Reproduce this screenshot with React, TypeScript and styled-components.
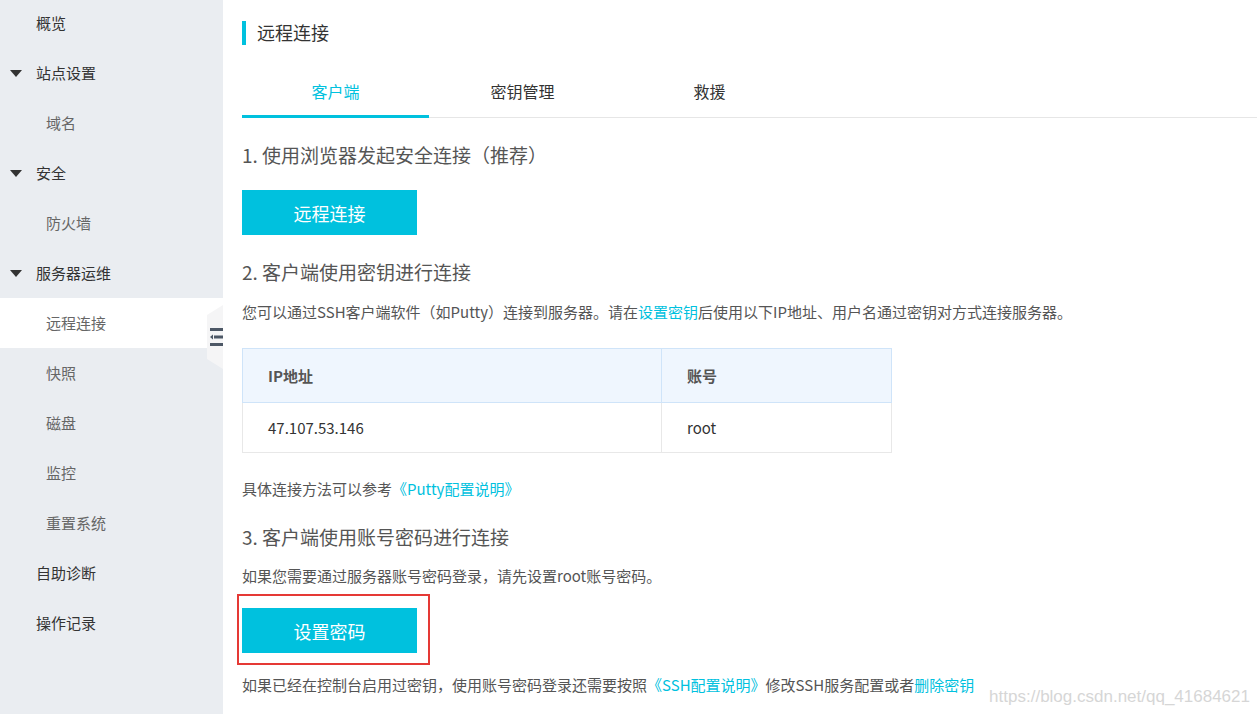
import React from "react";
import styled, { createGlobalStyle } from "styled-components";

const Global = createGlobalStyle`
  html, body {
    margin: 0;
    padding: 0;
    background: #fff;
    font-family: "Noto Sans CJK SC", "Noto Sans", sans-serif;
  }
`;

const Page = styled.div`
  display: flex;
  height: 714px;
  overflow: hidden;
  position: relative;
`;

const Side = styled.div`
  width: 223px;
  flex-shrink: 0;
  background: #eaedf1;
  margin-top: -2px;
  position: relative;
`;

const NavItem = styled.div<{ sub?: boolean; active?: boolean }>`
  height: 50px;
  display: flex;
  align-items: center;
  padding-bottom: 1px;
  box-sizing: border-box;
  font-size: 15px;
  color: ${({ sub }) => (sub ? "#666" : "#333")};
  padding-left: ${({ sub }) => (sub ? "46px" : "36px")};
  background: ${({ active }) => (active ? "#fff" : "transparent")};
  position: relative;
`;

const Caret = styled.span`
  position: absolute;
  left: 10px;
  top: 22px;
  width: 0;
  height: 0;
  border-left: 6px solid transparent;
  border-right: 6px solid transparent;
  border-top: 7px solid #333;
`;

const Handle = styled.div`
  position: absolute;
  left: 207px;
  top: 305px;
  width: 16px;
  height: 64px;
  background: #f5f5f6;
  clip-path: polygon(0 10px, 100% 0, 100% 100%, 0 54px);
  display: flex;
  align-items: center;
  justify-content: flex-end;
`;

const Main = styled.div`
  flex: 1;
  padding-left: 19px;
  color: #555;
`;

const Title = styled.div`
  margin-top: 21px;
  height: 24px;
  border-left: 4px solid #00c1de;
  padding-left: 11px;
  font-size: 18px;
  line-height: 22px;
  color: #333;
`;

const Tabs = styled.div`
  display: flex;
  margin-top: 23px;
  border-bottom: 1px solid #e6e6e6;
`;

const Tab = styled.div<{ active?: boolean }>`
  width: 187px;
  height: 50px;
  box-sizing: border-box;
  display: flex;
  align-items: center;
  justify-content: center;
  font-size: 16px;
  color: ${({ active }) => (active ? "#00c1de" : "#333")};
  border-bottom: 3px solid ${({ active }) => (active ? "#00c1de" : "transparent")};
  margin-bottom: -1px;
  padding-bottom: 1px;
`;

const Heading = styled.div<{ top: number }>`
  margin-top: ${({ top }) => top}px;
  font-size: 19px;
  line-height: 26px;
  color: #555;
  white-space: nowrap;
`;

const Button = styled.div`
  width: 175px;
  height: 45px;
  background: #00c1de;
  color: #fff;
  font-size: 18px;
  display: flex;
  align-items: center;
  justify-content: center;
`;

const ButtonWrap = styled.div<{ top: number }>`
  margin-top: ${({ top }) => top}px;
`;

const Highlight = styled.div`
  margin-top: 8px;
  margin-left: -5px;
  width: 193px;
  height: 71px;
  border: 2px solid #e53935;
  padding: 12px 0 0 3px;
  box-sizing: border-box;
`;

const Text = styled.div<{ top: number }>`
  margin-top: ${({ top }) => top}px;
  font-size: 15px;
  line-height: 20px;
  color: #555;
  white-space: nowrap;
`;

const A = styled.span`
  color: #00c1de;
`;

const Table = styled.table`
  margin-top: 26px;
  width: 650px;
  border-collapse: collapse;
  font-size: 15px;
  color: #333;
`;

const Th = styled.th<{ w?: number }>`
  height: 53px;
  padding: 0 0 0 25px;
  background: #eff6fe;
  border: 1px solid #cfe4f9;
  text-align: left;
  font-weight: bold;
  color: #555;
  width: ${({ w }) => (w ? `${w}px` : "auto")};
`;

const Td = styled.td`
  height: 49px;
  padding: 0 0 0 25px;
  border: 1px solid #e8e8e8;
`;

const Mark = styled.div`
  position: absolute;
  right: 7px;
  bottom: 7px;
  font-family: "Liberation Sans", Arial, sans-serif;
  font-size: 17px;
  color: #d6d6d6;
`;

export default function App() {
  return (
    <Page>
      <Global />
      <Side>
        <NavItem>概览</NavItem>
        <NavItem><Caret />站点设置</NavItem>
        <NavItem sub>域名</NavItem>
        <NavItem><Caret />安全</NavItem>
        <NavItem sub>防火墙</NavItem>
        <NavItem><Caret />服务器运维</NavItem>
        <NavItem sub active>远程连接</NavItem>
        <NavItem sub>快照</NavItem>
        <NavItem sub>磁盘</NavItem>
        <NavItem sub>监控</NavItem>
        <NavItem sub>重置系统</NavItem>
        <NavItem>自助诊断</NavItem>
        <NavItem>操作记录</NavItem>
      </Side>
      <Handle>
        <svg width="13" height="18" viewBox="0 0 13 18">
          <rect x="0" y="0" width="13" height="3" fill="#4d5866" />
          <rect x="4" y="7.5" width="9" height="3" fill="#4d5866" />
          <path d="M0 9 L3 6.5 L3 11.5 Z" fill="#4d5866" />
          <rect x="0" y="15" width="13" height="3" fill="#4d5866" />
        </svg>
      </Handle>
      <Main>
        <Title>远程连接</Title>
        <Tabs>
          <Tab active>客户端</Tab>
          <Tab>密钥管理</Tab>
          <Tab>救援</Tab>
        </Tabs>
        <Heading top={24}>1. 使用浏览器发起安全连接（推荐）</Heading>
        <ButtonWrap top={22}>
          <Button>远程连接</Button>
        </ButtonWrap>
        <Heading top={24}>2. 客户端使用密钥进行连接</Heading>
        <Text top={17}>
          您可以通过SSH客户端软件（如Putty）连接到服务器。请在<A>设置密钥</A>后使用以下IP地址、用户名通过密钥对方式连接服务器。
        </Text>
        <Table>
          <thead>
            <tr>
              <Th w={393}>IP地址</Th>
              <Th>账号</Th>
            </tr>
          </thead>
          <tbody>
            <tr>
              <Td>47.107.53.146</Td>
              <Td>root</Td>
            </tr>
          </tbody>
        </Table>
        <Text top={26}>
          具体连接方法可以参考<A>《Putty配置说明》</A>
        </Text>
        <Heading top={25}>3. 客户端使用账号密码进行连接</Heading>
        <Text top={16}>如果您需要通过服务器账号密码登录，请先设置root账号密码。</Text>
        <Highlight>
          <Button>设置密码</Button>
        </Highlight>
        <Text top={10}>
          如果已经在控制台启用过密钥，使用账号密码登录还需要按照<A>《SSH配置说明》</A>修改SSH服务配置或者<A>删除密钥</A>
        </Text>
      </Main>
      <Mark>https://blog.csdn.net/qq_41684621</Mark>
    </Page>
  );
}
